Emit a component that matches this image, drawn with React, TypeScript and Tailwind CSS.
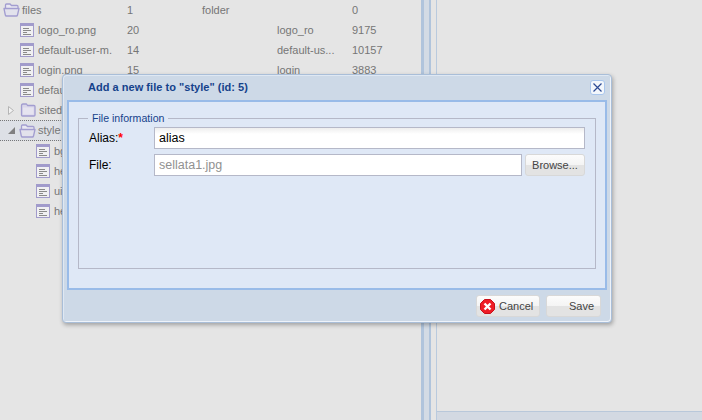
import React from 'react';

const FolderIcon = ({ open }: { open?: boolean }) => (
  <svg width="17" height="14" viewBox="0 0 17 14" className="shrink-0">
    {open ? (
      <>
        <path d="M2.5 5 L2.5 2 Q2.5 1 3.5 1 H7 L8.5 2.5 H14 Q15 2.5 15 3.5 V5" fill="#e9e8f2" stroke="#a29dd0" strokeWidth="1.3" />
        <path d="M1 5.5 H16 L14.5 12 Q14.3 13 13.3 13 H3.5 Q2.5 13 2.3 12 Z" fill="#e2e2ec" stroke="#a29dd0" strokeWidth="1.3" strokeLinejoin="round" />
      </>
    ) : (
      <>
        <path d="M1.5 3 Q1.5 1 3 1 H6.5 L7.5 2.5 H14 Q15 2.5 15 3.5 V12 Q15 13 14 13 H2.5 Q1.5 13 1.5 12 Z" fill="#d9d6ea" stroke="#a29dd0" strokeWidth="1.3" strokeLinejoin="round" />
        <path d="M3 4.5 H13.5 V11.5 H3 Z" fill="#e6e4f0" />
      </>
    )}
  </svg>
);

const FileIcon = () => (
  <svg width="14" height="14" viewBox="0 0 14 14" className="shrink-0">
    <rect x="0.5" y="0.5" width="13" height="13" fill="#f0f0f2" stroke="#a19bcb" />
    <rect x="1" y="1" width="12" height="2" fill="#a19bcb" />
    <path d="M3 5.5 H9 M3 7.5 H11 M3 9.5 H7 M3 11.5 H11" stroke="#8a8a8a" strokeWidth="1" />
  </svg>
);

const rows = [
  { kind: 'folder', indent: 'pl-[3px]', name: 'files', id: '1', type: 'folder', alias: '', size: '0' },
  { kind: 'file', indent: 'pl-[20px]', name: 'logo_ro.png', id: '20', type: '', alias: 'logo_ro', size: '9175' },
  { kind: 'file', indent: 'pl-[20px]', name: 'default-user-m.', id: '14', type: '', alias: 'default-us...', size: '10157' },
  { kind: 'file', indent: 'pl-[20px]', name: 'login.png', id: '15', type: '', alias: 'login', size: '3883' },
  { kind: 'file', indent: 'pl-[20px]', name: 'default', id: '', type: '', alias: '', size: '' },
  { kind: 'closed', indent: 'pl-[8px]', name: 'sitedata', id: '', type: '', alias: '', size: '' },
  { kind: 'open', indent: 'pl-[8px]', name: 'style', id: '', type: '', alias: '', size: '' },
  { kind: 'file', indent: 'pl-[36px]', name: 'bg', id: '', type: '', alias: '', size: '' },
  { kind: 'file', indent: 'pl-[36px]', name: 'he', id: '', type: '', alias: '', size: '' },
  { kind: 'file', indent: 'pl-[36px]', name: 'ui', id: '', type: '', alias: '', size: '' },
  { kind: 'file', indent: 'pl-[36px]', name: 'he', id: '', type: '', alias: '', size: '' },
];

const TreeRow = ({ row }: any) => (
  <div
    className={`grid grid-cols-[127px_75px_75px_75px_69px] items-center text-[11px] text-[#767676] ${
      row.kind === 'open' ? 'h-[21px] border-y border-dotted border-[#777] bg-[#dde0e6]' : 'h-5'
    }`}
  >
    <div className={`flex items-center ${row.indent} overflow-hidden whitespace-nowrap`}>
      {row.kind === 'closed' && (
        <svg width="6" height="9" viewBox="0 0 6 9" className="mr-[6px] shrink-0">
          <path d="M0.5 0.5 L5.5 4.5 L0.5 8.5 Z" fill="#f2f2f2" stroke="#b5b5b5" />
        </svg>
      )}
      {row.kind === 'open' && (
        <svg width="7" height="7" viewBox="0 0 7 7" className="mr-[4px] shrink-0">
          <path d="M7 0 V7 H0 Z" fill="#808080" />
        </svg>
      )}
      {(row.kind === 'folder' || row.kind === 'open') && <FolderIcon open />}
      {row.kind === 'closed' && <FolderIcon />}
      {row.kind === 'file' && <FileIcon />}
      <span className={row.kind === 'file' ? 'ml-1' : 'ml-[2px]'}>{row.name}</span>
    </div>
    <div>{row.id}</div>
    <div>{row.type}</div>
    <div className="overflow-hidden whitespace-nowrap">{row.alias}</div>
    <div>{row.size}</div>
  </div>
);

const Button = ({ children, className }: any) => (
  <button
    className={`flex items-center rounded-[3px] border border-[#d8d8d8] bg-[linear-gradient(#fcfcfc_0,#f4f4f4_50%,#e3e3e3_50%,#e3e3e3_100%)] text-[11px] text-[#444] ${className}`}
  >
    {children}
  </button>
);

export default function App() {
  return (
    <div className="relative flex h-[420px] w-[702px] overflow-hidden bg-[#e5e5e5] font-['Liberation_Sans',Arial,sans-serif]">
      {/* left tree */}
      <div className="w-[421px] shrink-0">
        {rows.map((row, i) => (
          <TreeRow key={i} row={row} />
        ))}
      </div>

      {/* splitter */}
      <div className="flex shrink-0">
        <div className="w-[3px] bg-[#b0c4dc]" />
        <div className="w-[5px] bg-[#d3dbe5]" />
        <div className="w-[2px] bg-[#b0c4dc]" />
        <div className="w-[5px] bg-[#e5e5e5]" />
        <div className="w-px bg-[#b9cade]" />
      </div>

      {/* right side */}
      <div className="flex min-w-0 flex-1 flex-col">
        <div className="flex-1" />
        <div className="h-[9px] border-t border-[#b9c8da] bg-[#d3d9e2]" />
      </div>

      {/* dialog */}
      <div className="absolute left-[62px] top-[74px] flex h-[249px] w-[550px] flex-col rounded-[4px] border border-[#a9bed8] bg-[#cdd9e7] shadow-[inset_1px_1px_0_#dfe8f3,inset_-1px_-1px_0_#eef3fa,1px_2px_4px_rgba(0,0,0,0.3)]">
        <div className="flex h-[25px] shrink-0 items-center justify-between pl-[25px] pr-[6px]">
          <span className="text-[11px] font-bold tracking-[0.03px] text-[#15428b]">Add a new file to "style" (id: 5)</span>
          <div className="flex h-[15px] w-[15px] items-center justify-center rounded-[3px] border border-[#a9c6ec] bg-[#f3f7fc]">
            <svg width="11" height="11" viewBox="0 0 11 11">
              <path d="M1.5 1.5 L9.5 9.5 M9.5 1.5 L1.5 9.5" stroke="#2c4a94" strokeWidth="1.2" />
            </svg>
          </div>
        </div>

        <div className="mx-1 h-[190px] shrink-0 border-2 border-[#99bbe8] bg-[#dfe8f6] px-[9px] pt-[10px]">
          <fieldset className="h-[157px] border border-[#b5b8c8] px-[10px] pb-0">
            <legend className="ml-[-1px] px-1 text-[10.6px] leading-[13px] text-[#15428b]">File information</legend>
            <div className="mt-[2px] flex h-[22px] items-center">
              <label className="w-[65px] shrink-0 text-[12px] text-black">
                Alias:<span className="font-bold text-[#ff0000]">*</span>
              </label>
              <input
                readOnly
                value="alias"
                className="h-[22px] w-[431px] border border-[#b5b8c8] bg-[linear-gradient(#eeeeee,#ffffff_6px)] px-1 text-[12.5px] text-black outline-none"
              />
            </div>
            <div className="mt-[5px] flex h-[22px] items-center">
              <label className="w-[65px] shrink-0 text-[12px] text-black">File:</label>
              <input
                readOnly
                placeholder="sellata1.jpg"
                className="h-[22px] w-[368px] border border-[#b5b8c8] bg-white px-1 text-[12.5px] outline-none placeholder:text-[#919191]"
              />
              <Button className="ml-[3px] h-[22px] w-[60px] justify-center">Browse...</Button>
            </div>
          </fieldset>
        </div>

        <div className="flex flex-1 items-center justify-end gap-[6px] pr-[10px]">
          <Button className="h-[22px] w-[64px] pl-[3px]">
            <svg width="15" height="15" viewBox="0 0 15 15" className="mr-[4px] shrink-0">
              <path d="M4.5 0.5 H10.5 L14.5 4.5 V10.5 L10.5 14.5 H4.5 L0.5 10.5 V4.5 Z" fill="#ee1c25" stroke="#c8101a" />
              <path d="M4.5 4.5 L10.5 10.5 M10.5 4.5 L4.5 10.5" stroke="#ffffff" strokeWidth="2.4" />
            </svg>
            Cancel
          </Button>
          <Button className="h-[22px] w-[55px] justify-end pr-[6px]">Save</Button>
        </div>
      </div>
    </div>
  );
}
